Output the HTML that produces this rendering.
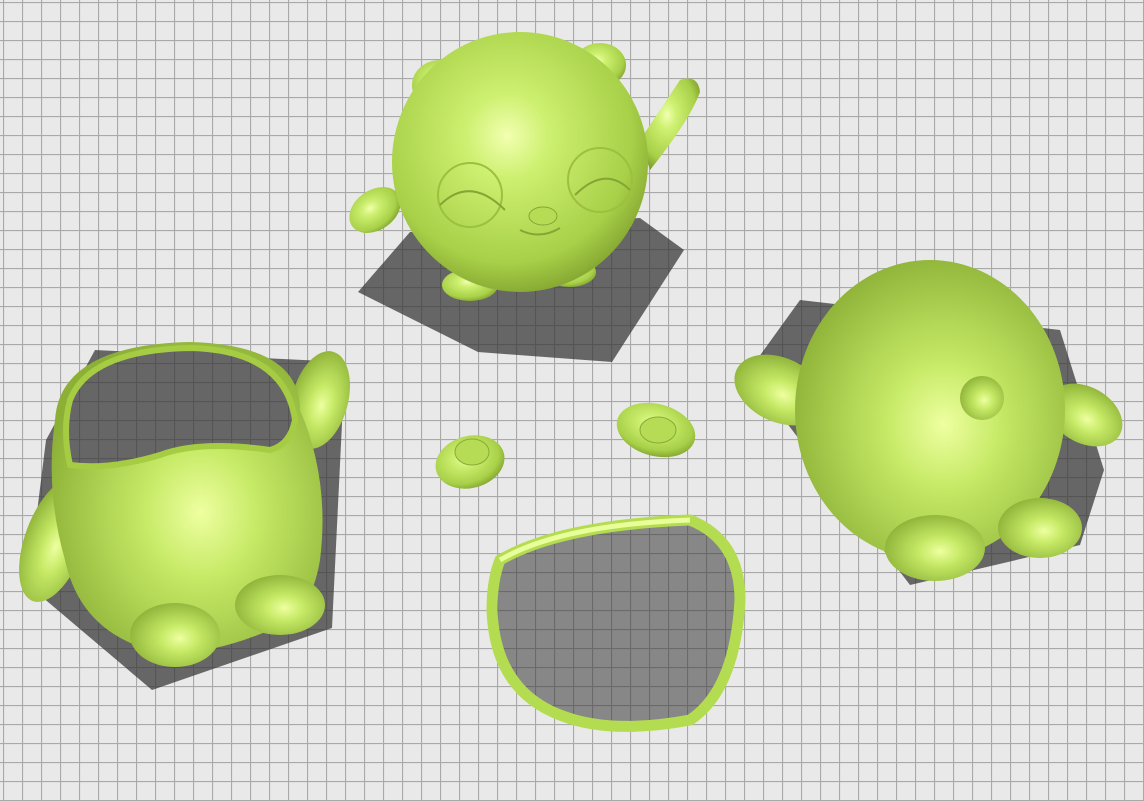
<!DOCTYPE html>
<html><head><meta charset="utf-8"><style>
html,body{margin:0;padding:0;width:1144px;height:801px;overflow:hidden;background:#e9e9e9}
svg{display:block}
</style></head><body>
<svg width="1144" height="801" viewBox="0 0 1144 801" xmlns="http://www.w3.org/2000/svg">
<defs>
<pattern id="g" width="19" height="19" patternUnits="userSpaceOnUse" patternTransform="translate(3,2)">
<rect width="19" height="19" fill="#e9e9e9"/>
<path d="M0 0.5H19M0.5 0V19" stroke="#a9a9a9" stroke-width="1.2"/>
</pattern>
<pattern id="gd" width="19" height="19" patternUnits="userSpaceOnUse" patternTransform="translate(3,2)">
<rect width="19" height="19" fill="#666"/>
<path d="M0 0.5H19M0.5 0V19" stroke="#555" stroke-width="1.2"/>
</pattern>
<radialGradient id="gr" cx="0.45" cy="0.4" r="0.65">
<stop offset="0" stop-color="#f2ffb0"/>
<stop offset="0.25" stop-color="#cdf070"/>
<stop offset="0.75" stop-color="#a8d048"/>
<stop offset="1" stop-color="#7c9c2c"/>
</radialGradient>
<radialGradient id="gr2" cx="0.55" cy="0.55" r="0.6">
<stop offset="0" stop-color="#eeffa0"/>
<stop offset="0.35" stop-color="#c6ea66"/>
<stop offset="1" stop-color="#8cb036"/>
</radialGradient>
</defs>
<rect width="1144" height="801" fill="url(#g)"/>
<g fill="url(#gd)">
<polygon points="358,292 410,232 640,218 684,250 612,362 478,352"/>
<polygon points="28,585 46,440 95,350 345,362 332,628 152,690"/>
<polygon points="748,372 800,300 1060,330 1104,470 1080,545 910,585"/>
</g>
<g fill="url(#gr)">
<ellipse cx="375" cy="210" rx="28" ry="20" transform="rotate(-35 375 210)"/>
<path d="M640 140 Q670 95 680 80 Q698 74 700 92 Q690 120 650 170Z"/>
<ellipse cx="470" cy="285" rx="28" ry="16"/>
<ellipse cx="570" cy="272" rx="26" ry="15"/>
<ellipse cx="440" cy="85" rx="28" ry="25"/>
<ellipse cx="600" cy="65" rx="26" ry="22"/>
<ellipse cx="520" cy="162" rx="128" ry="130"/>
</g>
<g fill="none" stroke="#86a534" stroke-width="2">
<circle cx="470" cy="195" r="32" stroke="#9cc040"/>
<circle cx="600" cy="180" r="32" stroke="#9cc040"/>
<path d="M440 205 Q470 175 505 210"/>
<path d="M575 195 Q605 165 630 190"/>
<path d="M520 230 Q540 240 560 228"/>
</g>
<ellipse cx="543" cy="216" rx="14" ry="9" fill="#b6dc56" stroke="#86a534"/>
<g fill="url(#gr2)">
<ellipse cx="55" cy="540" rx="30" ry="65" transform="rotate(20 55 540)"/>
<ellipse cx="320" cy="400" rx="28" ry="50" transform="rotate(15 320 400)"/>
<path d="M55 420 Q60 345 190 342 Q300 345 300 410 Q330 480 320 560 Q310 620 270 630 Q200 660 150 650 Q80 630 65 560 Q45 490 55 420Z"/>
<ellipse cx="175" cy="635" rx="45" ry="32"/>
<ellipse cx="280" cy="605" rx="45" ry="30"/>
</g>
<path d="M70 400 Q90 350 190 348 Q285 350 295 420 Q290 445 270 450 Q200 440 160 455 Q110 470 70 465 Q62 430 70 400Z" fill="url(#gd)" stroke="#a6cc44" stroke-width="6"/>
<g fill="url(#gr2)">
<ellipse cx="780" cy="390" rx="48" ry="32" transform="rotate(25 780 390)"/>
<ellipse cx="1085" cy="415" rx="40" ry="28" transform="rotate(30 1085 415)"/>
<ellipse cx="930" cy="410" rx="135" ry="150"/>
<ellipse cx="935" cy="548" rx="50" ry="33"/>
<ellipse cx="1040" cy="528" rx="42" ry="30"/>
<ellipse cx="982" cy="398" rx="22" ry="22"/>
</g>
<ellipse cx="470" cy="462" rx="35" ry="26" fill="url(#gr)" transform="rotate(-15 470 462)"/>
<ellipse cx="472" cy="452" rx="17" ry="13" fill="#b6dc56" stroke="#8aaa38"/>
<ellipse cx="656" cy="430" rx="40" ry="26" fill="url(#gr)" transform="rotate(15 656 430)"/>
<ellipse cx="658" cy="430" rx="18" ry="13" fill="#b6dc56" stroke="#8aaa38"/>
<path d="M500 560 Q560 525 690 520 Q740 540 740 600 Q735 690 690 720 Q610 735 560 715 Q495 690 492 610 Q492 580 500 560Z" fill="url(#gd)" fill-opacity="0.75" stroke="#b4dc50" stroke-width="11"/>
<path d="M500 560 Q560 525 690 520" fill="none" stroke="#e8ff9a" stroke-width="5"/>
</svg>
</body></html>
